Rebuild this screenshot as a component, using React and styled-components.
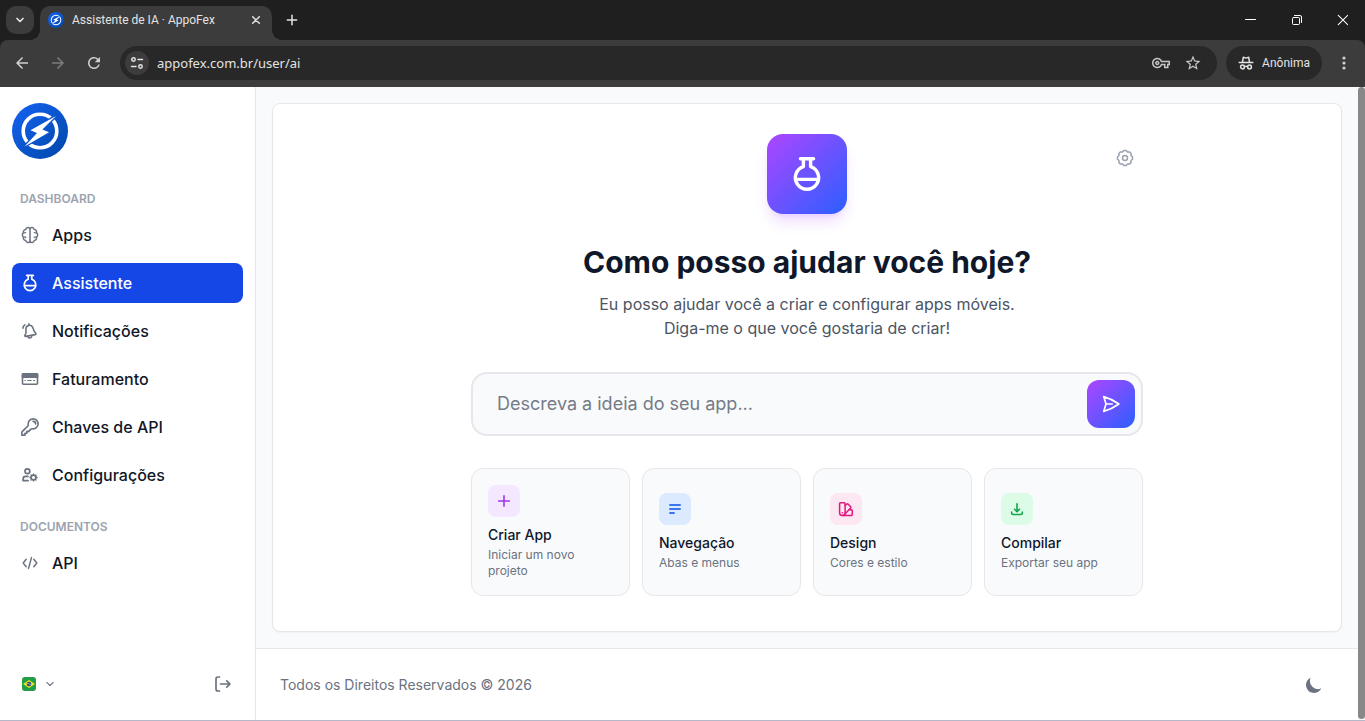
import { useState } from "react";
import styled, { createGlobalStyle, css } from "styled-components";
import { HiOutlineKey, HiOutlinePaperAirplane } from "react-icons/hi2";
import { MdOutlineVpnKey, MdStarBorder, MdArrowBack, MdArrowForward, MdRefresh } from "react-icons/md";

const GlobalStyle = createGlobalStyle`
  * {
    box-sizing: border-box;
  }

  body {
    margin: 0;
    font-family: Inter, "Liberation Sans", sans-serif;
    color: #0f172a;
    background: #ffffff;
  }

  button,
  input {
    font-family: inherit;
    color: inherit;
  }

  button {
    padding: 0;
    border: none;
    background: none;
    cursor: pointer;
  }

  h1, h2, p, ul {
    margin: 0;
    padding: 0;
  }

  svg {
    display: block;
    flex-shrink: 0;
  }
`;

const Window = styled.div`
  min-height: 100vh;
  display: flex;
  flex-direction: column;
  border-bottom: 1px solid #b4b8c8;
`;

/* ---------- browser ---------- */

const Browser = styled.header`
  background: #1f1f1f;
  color: #e3e3e3;
  font-family: Roboto, "Open Sans", sans-serif;
`;

const TabStrip = styled.div`
  height: 40px;
  padding: 6px 0 0 6px;
  display: flex;
  align-items: flex-start;
`;

const TabSearch = styled.button`
  width: 28px;
  height: 28px;
  border-radius: 10px;
  background: #3c3c3c;
  display: grid;
  place-items: center;
`;

const Tab = styled.div`
  position: relative;
  width: 232px;
  height: 34px;
  margin-left: 6px;
  padding: 0 8px 6px;
  border-radius: 10px 10px 0 0;
  background: #3c3c3c;
  display: flex;
  align-items: center;
  gap: 8px;
  font-size: 12px;
  line-height: 28px;

  &::before,
  &::after {
    content: "";
    position: absolute;
    bottom: 0;
    width: 10px;
    height: 10px;
  }

  &::before {
    right: 100%;
    background: radial-gradient(circle at 0 0, transparent 10px, #3c3c3c 10px);
  }

  &::after {
    left: 100%;
    background: radial-gradient(circle at 100% 0, transparent 10px, #3c3c3c 10px);
  }
`;

const TabTitle = styled.span`
  flex: 1;
  white-space: nowrap;
`;

const TabButton = styled.button`
  width: ${({ $size }) => $size}px;
  height: ${({ $size }) => $size}px;
  display: grid;
  place-items: center;
`;

const NewTab = styled(TabButton)`
  margin-left: 6px;
`;

const WindowButtons = styled.div`
  margin-left: auto;
  display: flex;
`;

const WindowButton = styled.button`
  width: 46px;
  height: 28px;
  color: #ffffff;
  display: grid;
  place-items: center;
`;

const Toolbar = styled.div`
  padding: 6px 3px 7px 4px;
  border-radius: 8px 8px 0 0;
  background: #3c3c3c;
  display: flex;
  align-items: center;
`;

const ToolButton = styled.button`
  width: 36px;
  height: 34px;
  display: grid;
  place-items: center;
  color: ${({ disabled }) => (disabled ? "#7c7c7c" : "#d0d0d0")};
`;

const AddressBar = styled.div`
  flex: 1;
  height: 34px;
  margin: 0 9px 0 8px;
  padding: 0 8px 0 5px;
  border-radius: 17px;
  background: #282828;
  display: flex;
  align-items: center;

  input {
    flex: 1;
    min-width: 0;
    margin-left: 8px;
    padding: 0;
    border: none;
    outline: none;
    background: none;
    font-family: "Noto Sans", "Open Sans", sans-serif;
    font-size: 13px;
  }
`;

const SiteInfo = styled.button`
  width: 24px;
  height: 24px;
  border-radius: 50%;
  background: #3c3c3c;
  display: grid;
  place-items: center;
`;

const AddressAction = styled.button`
  width: 32px;
  height: 28px;
  display: grid;
  place-items: center;
  color: #c7c7c7;
`;

const Incognito = styled.button`
  height: 34px;
  margin-right: 4px;
  padding: 0 12px;
  border-radius: 17px;
  background: #282828;
  display: flex;
  align-items: center;
  gap: 8px;
  font-size: 12px;
`;

/* ---------- page ---------- */

const Page = styled.div`
  flex: 1;
  display: flex;
  background: #f9fafb;
`;

const Sidebar = styled.aside`
  width: 256px;
  flex-shrink: 0;
  padding: 16px 12px;
  border-right: 1px solid #e5e7eb;
  background: #ffffff;
  display: flex;
  flex-direction: column;
`;

const NavSection = styled.nav`
  margin-top: ${({ $first }) => ($first ? 28 : 20)}px;
`;

const NavTitle = styled.h2`
  padding: 0 8px;
  margin-bottom: 4px;
  font-size: 12px;
  line-height: 24px;
  font-weight: 600;
  color: #9ca3af;
  text-transform: uppercase;
`;

const NavList = styled.ul`
  list-style: none;
  display: flex;
  flex-direction: column;
  gap: 8px;
`;

const NavLink = styled.a`
  height: 40px;
  padding: 0 8px;
  border-radius: 8px;
  display: flex;
  align-items: center;
  gap: 12px;
  font-size: 16px;
  font-weight: 500;
  color: #111827;
  text-decoration: none;

  svg {
    color: #6b7280;
  }

  ${({ $active }) =>
    $active &&
    css`
      background: #1447e6;
      color: #ffffff;

      svg {
        color: #ffffff;
      }
    `}
`;

const SidebarFooter = styled.div`
  margin-top: auto;
  padding: 0 10px 0 8px;
  height: 40px;
  display: flex;
  align-items: center;
  justify-content: space-between;
  color: #6b7280;
`;

const LanguageButton = styled.button`
  padding: 0 2px;
  height: 32px;
  display: flex;
  align-items: center;
  gap: 10px;
`;

const Content = styled.div`
  flex: 1;
  min-width: 0;
  display: flex;
  flex-direction: column;
`;

const Main = styled.main`
  flex: 1;
  padding: 16px;
  display: flex;
`;

const Panel = styled.section`
  flex: 1;
  padding: 30px 16px 35px;
  border: 1px solid #e5e7eb;
  border-radius: 8px;
  background: #ffffff;
  box-shadow: 0 1px 2px rgba(0, 0, 0, 0.04);
`;

const Assistant = styled.div`
  position: relative;
  max-width: 672px;
  margin: 0 auto;
  display: flex;
  flex-direction: column;
  align-items: center;
`;

const SettingsButton = styled.button`
  position: absolute;
  top: 6px;
  right: 0;
  width: 36px;
  height: 36px;
  display: grid;
  place-items: center;
  color: #99a1af;
`;

const gradient = css`
  background: linear-gradient(135deg, #ad46ff, #2b5fff);
`;

const Hero = styled.div`
  ${gradient}
  width: 80px;
  height: 80px;
  border-radius: 16px;
  color: #ffffff;
  display: grid;
  place-items: center;
  box-shadow: 0 10px 15px -3px rgba(173, 70, 255, 0.2), 0 4px 6px -4px rgba(173, 70, 255, 0.2);
`;

const Heading = styled.h1`
  margin-top: 30px;
  font-size: 30px;
  line-height: 36px;
  font-weight: 700;
  text-align: center;
`;

const Lead = styled.p`
  max-width: 448px;
  margin-top: 12px;
  font-size: 16px;
  line-height: 24px;
  color: #4b5563;
  text-align: center;
`;

const Prompt = styled.form`
  width: 100%;
  height: 64px;
  margin-top: 32px;
  padding: 0 6px 0 24px;
  border: 2px solid #e5e7eb;
  border-radius: 16px;
  background: #f9fafb;
  display: flex;
  align-items: center;

  input {
    flex: 1;
    min-width: 0;
    padding: 0;
    border: none;
    outline: none;
    background: none;
    font-size: 18px;
    line-height: 28px;
  }

  input::placeholder {
    color: #757b87;
    opacity: 1;
  }
`;

const SendButton = styled.button`
  ${gradient}
  width: 48px;
  height: 48px;
  border-radius: 12px;
  color: #ffffff;
  display: grid;
  place-items: center;

  path {
    stroke-width: 2;
  }
`;

const Suggestions = styled.div`
  width: 100%;
  margin-top: 32px;
  display: grid;
  grid-template-columns: repeat(4, 1fr);
  gap: 12px;
`;

const Suggestion = styled.button`
  padding: 16px;
  border: 1px solid #e5e7eb;
  border-radius: 12px;
  background: #f9fafb;
  display: flex;
  flex-direction: column;
  justify-content: center;
  align-items: flex-start;
  text-align: left;
`;

const SuggestionIcon = styled.span`
  width: 32px;
  height: 32px;
  margin-bottom: 8px;
  border-radius: 8px;
  background: ${({ $bg }) => $bg};
  color: ${({ $color }) => $color};
  display: grid;
  place-items: center;
`;

const SuggestionTitle = styled.span`
  font-size: 14px;
  line-height: 20px;
  font-weight: 500;
`;

const SuggestionText = styled.span`
  margin-top: 2px;
  font-size: 12px;
  line-height: 16px;
  color: #6b7280;
`;

const Footer = styled.footer`
  height: 72px;
  padding: 0 24px;
  border-top: 1px solid #e5e7eb;
  background: #ffffff;
  display: flex;
  align-items: center;
  justify-content: space-between;
  font-size: 14px;
  color: #6b7280;
`;

const ThemeButton = styled.button`
  width: 40px;
  height: 40px;
  display: grid;
  place-items: center;
  color: #6b7280;
`;

const ScrollTrack = styled.div`
  width: 7px;
  display: flex;
`;

const ScrollThumb = styled.div`
  flex: 1;
  margin-bottom: 1px;
  border-radius: 4px;
  background: #888888;
`;

/* ---------- icons ---------- */

const Stroke = ({ size = 20, box = 20, width = 1.5, children }) => (
  <svg
    width={size}
    height={size}
    viewBox={`0 0 ${box} ${box}`}
    fill="none"
    stroke="currentColor"
    strokeWidth={width}
    strokeLinecap="round"
    strokeLinejoin="round"
    aria-hidden="true"
  >
    {children}
  </svg>
);

const Logo = ({ size, id }) => (
  <svg width={size} height={size} viewBox="0 0 56 56" role="img" aria-label="AppoFex">
    <defs>
      <linearGradient id={id} x1="0" y1="0" x2="1" y2="1">
        <stop offset="0" stopColor="#1463f5" />
        <stop offset="1" stopColor="#0047a6" />
      </linearGradient>
    </defs>
    <circle cx="28" cy="28" r="28" fill={`url(#${id})`} />
    <circle cx="28" cy="28" r="16.8" fill="none" stroke="#fff" strokeWidth="3.6" />
    <path
      d="M44 13 18.4 27.3 25 30 12.6 43.4 37 29.3 30.4 26.6Z"
      fill="#fff"
      stroke="#0b55d0"
      strokeWidth="2.6"
      paintOrder="stroke"
    />
  </svg>
);

const BrainIcon = () => (
  <Stroke width={1.5}>
    <path d="M10 3.6C9.2 1.9 6.4 2.1 5.8 4.4 3.8 4.6 3.1 6.200 3.500 7.700 2 8.900 2 11.100 3.500 12.300c-.4 1.500.3 3.100 2.300 3.300.6 2.300 3.400 2.500 4.200.8Z" />
    <path d="M10 3.6c.8-1.700 3.600-1.500 4.200.8 2 .2 2.700 1.800 2.300 3.300 1.500 1.200 1.500 3.400 0 4.600.4 1.500-.3 3.100-2.300 3.300-.6 2.300-3.400 2.500-4.200.8" />
    <path d="M3.700 7.700c.7.4 1.400.3 2-.1M3.700 12.300c.7-.6 1.500-.5 2.200.2M16.300 7.700c-.7.4-1.400.3-2-.1M16.300 12.300c-.7-.6-1.500-.5-2.200.2" strokeWidth="1.200" />
  </Stroke>
);

const FlaskIcon = ({ size }) => (
  <Stroke size={size} width={1.7}>
    <path d="M6.7 2.4h6.6M8.2 2.4v3.9a5.8 5.8 0 1 0 3.6 0V2.4M4.400 12.700h11.200" />
  </Stroke>
);

const BellIcon = () => (
  <Stroke width={1.6}>
    <path d="M9 4.400C6.600 5 5.600 6.900 6 9.200c.4 2.300.3 3.300-1 5-.4.700-.1 1.300.6 1.200l9.700-1.800c.7-.2.900-.9.400-1.400-1.500-1.400-2-2.400-2.400-4.300C12.800 5.500 11.300 3.900 9 4.400ZM9.200 4.200 8.900 2.900" />
    <path d="M7.700 15.600c.7 2.100 4 1.700 4.200-.8M2.900 7.300c0-1.500.7-2.700 1.900-3.500" />
  </Stroke>
);

const CardIcon = () => (
  <Stroke width={1.6}>
    <rect x="2.5" y="4.8" width="15" height="10.4" rx="1" />
    <path d="M2.5 5h15v3.200h-15Z" fill="currentColor" />
    <path d="M5 11.500h.4M7.700 11.500h3.500M13.500 11.500h1" strokeWidth="1.2" />
  </Stroke>
);

const UserCogIcon = () => (
  <Stroke width={1.7}>
    <circle cx="7.400" cy="6.300" r="2.400" />
    <path d="M8 11.400H5.700A2.600 2.600 0 0 0 3.100 14v1.700h5" />
    <circle cx="13.500" cy="12.500" r="2.400" />
    <path
      d="M13.500 9v1M13.500 15v1M9.900 12.500h1M16.100 12.500h1M11 10l.7.700M15.300 14.300l.7.700M16 10l-.7.700M11.700 14.300 11 15"
      strokeWidth="1.300"
    />
  </Stroke>
);

const GearIcon = () => (
  <Stroke width={1.5}>
    <path d="M8.800 2.500h2.400L12.500 4l2-.1 1.600 1.600-.1 2 1.500 1.300v2.400L16 12.500l.1 2-1.600 1.600-2-.1-1.300 1.500H8.800L7.500 16l-2 .1-1.600-1.600.1-2-1.500-1.300V8.800L4 7.500l-.1-2 1.600-1.600 2 .1Z" />
    <circle cx="10" cy="10" r="2.500" />
  </Stroke>
);

const CodeIcon = () => (
  <Stroke width={1.5}>
    <path d="m6.200 6.300-3 3.700 3 3.700M13.800 6.300l3 3.700-3 3.700M11.500 4.600l-3 10.800" />
  </Stroke>
);

const LogoutIcon = () => (
  <Stroke width={1.7}>
    <path d="M6.500 3H5a2 2 0 0 0-2 2v10a2 2 0 0 0 2 2h1.500M7.500 10H17M13.800 6.800 17 10l-3.200 3.200" />
  </Stroke>
);

const FlagIcon = () => (
  <svg width="14" height="14" viewBox="0 0 14 14" aria-hidden="true">
    <rect width="14" height="14" rx="3" fill="#229e45" />
    <path d="M1 7 7 3l6 4-6 4Z" fill="#e8e020" />
    <circle cx="7" cy="7" r="2.300" fill="#2b4983" />
    <path d="M4.900 6.600c1.500-.2 3 .2 4 1.200" stroke="#fff" strokeWidth=".5" fill="none" />
  </svg>
);

const MoonIcon = () => (
  <svg width="20" height="20" viewBox="0 0 20 20" fill="currentColor" aria-hidden="true">
    <path d="M17.300 13.300A8 8 0 0 1 6.700 2.700a8 8 0 1 0 10.600 10.600Z" />
  </svg>
);

const SwatchIcon = () => (
  <Stroke size={16} box={16} width={1.5}>
    <path d="M2.500 1.800h3.700c.5 0 .9.400.9.900v9.100a2.750 2.750 0 0 1-5.500 0V2.700c0-.5.400-.9.900-.9Z" />
    <path d="m7.100 4.300 1.600-1.200c.4-.3.900-.3 1.300 0l2.600 2.700c.3.400.3.900 0 1.300L6.300 13.800" />
    <path d="M11.300 8.700h2c.6 0 1 .4 1 1v3.800c0 .6-.4 1-1 1H4.400M4.300 11.700h.1" />
  </Stroke>
);

const TuneIcon = () => (
  <Stroke size={16} box={16} width={1.5}>
    <circle cx="4.500" cy="4.500" r="1.700" />
    <path d="M9 4.500h4.500M2.500 11.500H7" />
    <circle cx="11.500" cy="11.500" r="1.700" />
  </Stroke>
);

const IncognitoIcon = () => (
  <Stroke size={16} box={16} width={1.5}>
    <path d="M1.200 7.500h13.600" />
    <path d="M4.500 7 5.300 2.300l2.700.8 2.700-.8.800 4.700" />
    <circle cx="4.500" cy="12" r="1.900" />
    <circle cx="11.500" cy="12" r="1.900" />
    <path d="M6.500 11.600c1-.5 2-.5 3 0" />
  </Stroke>
);

const menu = [
  { label: "Apps", icon: <BrainIcon /> },
  { label: "Assistente", icon: <FlaskIcon size={20} />, active: true },
  { label: "Notificações", icon: <BellIcon /> },
  { label: "Faturamento", icon: <CardIcon /> },
  { label: "Chaves de API", icon: <HiOutlineKey size={20} strokeWidth={2} /> },
  { label: "Configurações", icon: <UserCogIcon /> },
];

const docs = [{ label: "API", icon: <CodeIcon /> }];

const suggestions = [
  {
    title: "Criar App",
    text: "Iniciar um novo projeto",
    bg: "#f3e8ff",
    color: "#a436e8",
    icon: (
      <Stroke size={16} box={16} width={1.6}>
        <path d="M8 2.700v10.600M2.700 8h10.600" />
      </Stroke>
    ),
  },
  {
    title: "Navegação",
    text: "Abas e menus",
    bg: "#dbeafe",
    color: "#3b75f0",
    icon: (
      <Stroke size={16} box={16} width={1.9}>
        <path d="M3 4h10M3 8h10M3 12h4" />
      </Stroke>
    ),
  },
  {
    title: "Design",
    text: "Cores e estilo",
    bg: "#fce7f3",
    color: "#e0177d",
    icon: <SwatchIcon />,
  },
  {
    title: "Compilar",
    text: "Exportar seu app",
    bg: "#dcfce7",
    color: "#16a34a",
    icon: (
      <Stroke size={16} box={16} width={1.6}>
        <path d="M8 2.700v7.800M5.500 8.200 8 10.700l2.500-2.500M2.700 11v1.200c0 .8.600 1.300 1.300 1.300h8c.7 0 1.300-.5 1.300-1.300V11" />
      </Stroke>
    ),
  },
];

function Menu({ title, items, first }) {
  return (
    <NavSection $first={first} aria-label={title}>
      <NavTitle>{title}</NavTitle>
      <NavList>
        {items.map((item) => (
          <li key={item.label}>
            <NavLink href="#" $active={item.active} aria-current={item.active ? "page" : undefined}>
              {item.icon}
              {item.label}
            </NavLink>
          </li>
        ))}
      </NavList>
    </NavSection>
  );
}

function BrowserBar() {
  return (
    <Browser>
      <TabStrip>
        <TabSearch aria-label="Pesquisar guias">
          <Stroke size={12} box={12} width={1.7}>
            <path d="M3 4.500 6 7.500l3-3" />
          </Stroke>
        </TabSearch>
        <Tab>
          <Logo size={16} id="logo-tab" />
          <TabTitle>Assistente de IA · AppoFex</TabTitle>
          <TabButton $size={16} aria-label="Fechar guia">
            <Stroke size={10} box={10} width={1.5}>
              <path d="m1.700 1.700 6.600 6.600M8.300 1.700 1.700 8.300" />
            </Stroke>
          </TabButton>
        </Tab>
        <NewTab $size={28} aria-label="Nova guia">
          <Stroke size={12} box={12}>
            <path d="M6 1.300v9.400M1.300 6h9.400" />
          </Stroke>
        </NewTab>
        <WindowButtons>
          <WindowButton aria-label="Minimizar">
            <Stroke size={12} box={12} width={1}>
              <path d="M1.500 5.500h10" />
            </Stroke>
          </WindowButton>
          <WindowButton aria-label="Restaurar">
            <Stroke size={12} box={12} width={1}>
              <rect x="2.500" y="3.500" width="7" height="7" rx="1" />
              <path d="M4.500 1.500H10A1.500 1.500 0 0 1 11.500 3v5.500" />
            </Stroke>
          </WindowButton>
          <WindowButton aria-label="Fechar">
            <Stroke size={12} box={12} width={1.1}>
              <path d="m2.300 1.300 9.400 9.400M11.700 1.300 2.300 10.700" />
            </Stroke>
          </WindowButton>
        </WindowButtons>
      </TabStrip>
      <Toolbar>
        <ToolButton aria-label="Voltar">
          <MdArrowBack size={18} />
        </ToolButton>
        <ToolButton aria-label="Avançar" disabled>
          <MdArrowForward size={18} />
        </ToolButton>
        <ToolButton aria-label="Recarregar">
          <MdRefresh size={18} />
        </ToolButton>
        <AddressBar>
          <SiteInfo aria-label="Informações do site">
            <TuneIcon />
          </SiteInfo>
          <input aria-label="Endereço" defaultValue="appofex.com.br/user/ai" />
          <AddressAction aria-label="Senhas">
            <MdOutlineVpnKey size={18} />
          </AddressAction>
          <AddressAction aria-label="Favoritar">
            <MdStarBorder size={18} />
          </AddressAction>
        </AddressBar>
        <Incognito>
          <IncognitoIcon />
          Anônima
        </Incognito>
        <ToolButton aria-label="Menu">
          <svg width="4" height="16" viewBox="0 0 4 16" fill="currentColor" aria-hidden="true">
            <circle cx="2" cy="3" r="1.600" />
            <circle cx="2" cy="8" r="1.600" />
            <circle cx="2" cy="13" r="1.600" />
          </svg>
        </ToolButton>
      </Toolbar>
    </Browser>
  );
}

export default function App() {
  const [idea, setIdea] = useState("");

  return (
    <Window>
      <GlobalStyle />
      <BrowserBar />
      <Page>
        <Sidebar>
          <Logo size={56} id="logo-main" />
          <Menu title="Dashboard" items={menu} first />
          <Menu title="Documentos" items={docs} />
          <SidebarFooter>
            <LanguageButton aria-label="Idioma">
              <FlagIcon />
              <Stroke size={8} box={8} width={1.1}>
                <path d="M.8 2.300 4 5.500l3.200-3.200" />
              </Stroke>
            </LanguageButton>
            <button aria-label="Sair">
              <LogoutIcon />
            </button>
          </SidebarFooter>
        </Sidebar>
        <Content>
          <Main>
            <Panel>
              <Assistant>
                <SettingsButton aria-label="Ajustes">
                  <GearIcon />
                </SettingsButton>
                <Hero>
                  <FlaskIcon size={40} />
                </Hero>
                <Heading>Como posso ajudar você hoje?</Heading>
                <Lead>
                  Eu posso ajudar você a criar e configurar apps móveis. Diga-me o que você gostaria de criar!
                </Lead>
                <Prompt onSubmit={(e) => e.preventDefault()}>
                  <input
                    aria-label="Ideia do app"
                    placeholder="Descreva a ideia do seu app..."
                    value={idea}
                    onChange={(e) => setIdea(e.target.value)}
                  />
                  <SendButton type="submit" aria-label="Enviar">
                    <HiOutlinePaperAirplane size={20} />
                  </SendButton>
                </Prompt>
                <Suggestions>
                  {suggestions.map((s) => (
                    <Suggestion key={s.title}>
                      <SuggestionIcon $bg={s.bg} $color={s.color}>
                        {s.icon}
                      </SuggestionIcon>
                      <SuggestionTitle>{s.title}</SuggestionTitle>
                      <SuggestionText>{s.text}</SuggestionText>
                    </Suggestion>
                  ))}
                </Suggestions>
              </Assistant>
            </Panel>
          </Main>
          <Footer>
            <span>Todos os Direitos Reservados © 2026</span>
            <ThemeButton aria-label="Tema escuro">
              <MoonIcon />
            </ThemeButton>
          </Footer>
        </Content>
        <ScrollTrack>
          <ScrollThumb />
        </ScrollTrack>
      </Page>
    </Window>
  );
}
